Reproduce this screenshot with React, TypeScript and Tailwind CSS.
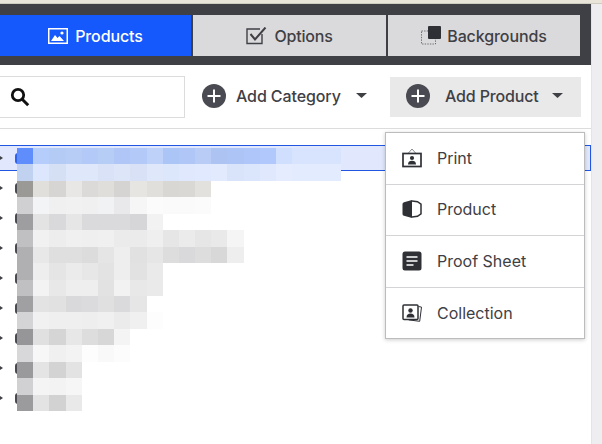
import React from 'react';

const font = "font-['Inter','Noto_Sans',sans-serif]";

// pixelated blur over the tree labels, one array per mosaic line
const mosaic: string[][] = [
  ['#5f8dfb','#b5cdfb','#b4cbf5','#b8cdf6','#b3caf8','#b6cdf6','#afc6f6','#b3c9f8','#bed1f8','#abc5f7','#b0c6f7','#b8ccf5','#adc3f2','#adc4f6','#afc6fa','#b0c8fc','#cfdffd','#d8e4fd','#d8e4fd','#d8e4fd'],
  ['#c1d1f0','#dce6fd','#d6e0f5','#dfe7fa','#dfe7fa','#d9e2f7','#dde6f9','#d8e1f5','#dfe7fa','#dde7fc','#dfe8fd','#e0e9fd','#e2ebfd','#d9e4fb','#dbe5fc','#dfe8fd','#e4ecfe','#e3ecfe','#e3ecfe','#e3ecfe'],
  ['#9a9996','#e0dfdc','#d6d5d3','#e8e7e5','#dbdad8','#dfdedb','#d5d4d2','#e6e5e2','#e0dfdc','#d8d7d4','#d9d8d5','#e2e1de'],
  ['#d0d0d2','#f3f4f6','#f0f0f0','#f1f1f1','#f0f0f0','#f1f2f3','#e9e9eb','#f6f6f6','#fbfbfb','#fafafa','#fafafa','#fbfbfb'],
  ['#9e9ea0','#e3e3e3','#d9d9db','#e6e6e6','#dadadc','#dadadc','#dadadc','#d6d6d8','#f2f2f2'],
  ['#c0c0c2','#f1f1f1','#ededed','#f0f0f0','#efefef','#f0f0f0','#ebebeb','#ebebeb','#efefef','#e6e6e6','#ebebeb','#e6e6e6','#e9e9e9','#f5f5f5'],
  ['#b0b0b2','#e8e8e8','#dfdfdf','#dfdfdf','#dcdcdc','#e5e5e5','#eeeeee','#e1e1e1','#e6e6e6','#dddddd','#d9d9db','#dddddd','#d8d8d8','#eeeeee'],
  ['#b0b0b2','#eeeeee','#e5e5e5','#ebebeb','#e7e7e7','#e3e3e3','#eeeeee','#e2e2e2','#eaeaea'],
  ['#c0c0c2','#f3f3f3','#e8e8e8','#eeeeee','#eeeeee','#e2e2e2','#f2f2f2','#e8e8e8','#eaeaea'],
  ['#a0a0a2','#e3e3e3','#e1e1e1','#d9d9db','#dbdbdd','#e0e0e0','#dadadc','#e6e6e6'],
  ['#d4d4d6','#f1f1f1','#efefef','#efefef','#eeeeee','#f0f0f0','#ebebeb','#f0f0f0','#fdfdfd'],
  ['#969698','#e0e0e0','#d5d5d5','#e7e7e7','#dddddd','#d7d7d7','#f4f4f4'],
  ['#d8d8da','#f7f7f7','#f0f0f0','#f3f3f3','#fdfdfd','#f9f9f9','#fcfcfc'],
  ['#9a9a9c','#e4e4e4','#d3d3d3','#e3e3e3'],
  ['#d1d1d3','#f4f4f4','#f3f3f3','#f6f6f6'],
  ['#9b9b9d','#e3e3e3','#d2d2d2','#e9e9e9'],
];

function PlusCircle() {
  return (
    <svg width="24" height="24" viewBox="0 0 24 24">
      <circle cx="12" cy="12" r="12" fill="#4a4b52" />
      <path d="M12 5.5v13M5.5 12h13" stroke="#fff" strokeWidth="2" />
    </svg>
  );
}

function Caret() {
  return (
    <svg width="11" height="5" viewBox="0 0 11 5">
      <path d="M0 0h11L5.5 5z" fill="#3f4045" />
    </svg>
  );
}

function PictureIcon() {
  return (
    <svg width="20" height="16" viewBox="0 0 20 16">
      <rect x="0.75" y="0.75" width="18.5" height="14.5" fill="none" stroke="#fff" strokeWidth="1.5" />
      <path d="M3 13l4-6 2.5 3 2-2 4.5 5z" fill="#fff" />
      <circle cx="14" cy="5" r="1.6" fill="#fff" />
    </svg>
  );
}

function CheckIcon() {
  return (
    <svg width="21" height="18" viewBox="0 0 21 18">
      <path d="M16 7v9.5H1V2h13" fill="none" stroke="#3f4045" strokeWidth="1.4" />
      <path d="M4.5 7l4.5 5.5L19.5 0.5" fill="none" stroke="#3f4045" strokeWidth="2" />
    </svg>
  );
}

function BackgroundIcon() {
  return (
    <svg width="21" height="19" viewBox="0 0 21 19">
      <rect x="0.5" y="5" width="14" height="13" fill="none" stroke="#55565b" strokeWidth="0.8" strokeDasharray="1.4 1.2" />
      <rect x="7" y="0" width="13" height="13" rx="1" fill="#2f3035" />
    </svg>
  );
}

function PrintIcon() {
  return (
    <svg width="20" height="20" viewBox="0 0 20 20">
      <path d="M6 5.5L10 1l4 4.5" fill="none" stroke="#8a8b90" strokeWidth="1" />
      <rect x="1" y="5.5" width="18" height="13" fill="none" stroke="#2f3035" strokeWidth="1.7" />
      <circle cx="10" cy="10" r="2.1" fill="#2f3035" />
      <path d="M6 16.5c0-3 1.6-3.8 4-3.8s4 .8 4 3.8z" fill="#2f3035" />
    </svg>
  );
}

function BookIcon() {
  return (
    <svg width="20" height="18" viewBox="0 0 20 18">
      <path d="M0.5 4Q0.5 2.6 2 2.2L10 0v18L2 15.8Q0.5 15.4 0.5 14z" fill="#2f3035" />
      <path d="M10 1l5.5 0.7 3.5 2.5v9.6l-3.5 2.5L10 17" fill="none" stroke="#2f3035" strokeWidth="1.5" />
    </svg>
  );
}

function SheetIcon() {
  return (
    <svg width="20" height="20" viewBox="0 0 20 20">
      <rect x="0.5" y="0.5" width="19" height="19" rx="2.5" fill="#2f3035" />
      <path d="M4.5 6h11M4.5 10h11M4.5 14h7" stroke="#fff" strokeWidth="1.7" />
    </svg>
  );
}

function CollectionIcon() {
  return (
    <svg width="20" height="18" viewBox="0 0 20 18">
      <path d="M16.5 2.5l3 .6-1.8 14.2-11-1.4" fill="none" stroke="#2f3035" strokeWidth="1" />
      <rect x="1" y="1" width="15" height="14.5" rx="1" fill="#fff" stroke="#2f3035" strokeWidth="1.5" />
      <circle cx="8.5" cy="6.5" r="2.2" fill="#2f3035" />
      <path d="M4.5 13.5c0-3 1.7-4 4-4s4 1 4 4z" fill="#2f3035" />
    </svg>
  );
}

const menuItems = [
  { label: 'Print', icon: <PrintIcon />, height: 'h-[52px] pb-[1px]' },
  { label: 'Product', icon: <BookIcon />, height: 'h-[51px] pb-[2px]' },
  { label: 'Proof Sheet', icon: <SheetIcon />, height: 'h-[52px] pb-[2px]' },
  { label: 'Collection', icon: <CollectionIcon />, height: 'h-[50px] pb-[1px]' },
];

function TreeRow({ selected }: { selected?: boolean }) {
  return (
    <div className={`flex items-center h-[26px] ${selected ? 'bg-[#e1e8fd] border-y border-r border-[#2356e0]' : ''}`}>
      <span className="w-0 h-0 border-y-[2.5px] border-y-transparent border-l-[3px] border-l-[#3f4045]" />
      <span className={`ml-[12px] w-[3px] h-[11px] rounded-l-sm ${selected ? 'bg-[#2f62f0]' : 'bg-[#4a4b50]'}`} />
    </div>
  );
}

export default function App() {
  return (
    <div className={`relative w-[602px] h-[444px] overflow-hidden bg-white flex flex-col ${font}`}>
      <div className="h-[4px] bg-[#e9e6d9] border-b border-[#cfcdc2]" />
      <div className="flex flex-1">
        <div className="w-[592px] flex flex-col bg-white border-r border-[#e4e4e6]">
          {/* tabs */}
          <div className="h-[61px] bg-[#3f4045] pt-[11px] flex gap-[2px]">
            <div className="w-[191px] h-[41px] bg-[#1558fb] flex items-center justify-center gap-[7px] text-white text-[16px] font-medium tracking-[-0.1px]">
              <PictureIcon />
              <span>Products</span>
            </div>
            <div className="w-[193px] h-[41px] bg-[#dadadc] flex items-center justify-center gap-[7px] text-[#3f4045] text-[16px] font-medium tracking-[-0.2px]">
              <CheckIcon />
              <span>Options</span>
            </div>
            <div className="w-[192px] h-[41px] bg-[#dadadc] flex items-center justify-center gap-[5px] text-[#3f4045] text-[16px] font-medium tracking-[-0.1px]">
              <BackgroundIcon />
              <span>Backgrounds</span>
            </div>
          </div>

          {/* toolbar */}
          <div className="h-[64px] border-b border-[#dcdcdc] flex items-center shrink-0">
            <div className="w-[185px] h-[42px] border border-l-0 border-[#dcdcdc] flex items-center pl-[10px] shrink-0">
              <svg width="20" height="20" viewBox="0 0 20 20">
                <circle cx="8" cy="8" r="5.7" fill="none" stroke="#111" strokeWidth="2.8" />
                <path d="M12.2 12.2l6 6" stroke="#111" strokeWidth="3" />
              </svg>
            </div>
            <div className="w-[205px] flex items-center pl-[17px] pb-[2px] text-[16px] font-medium text-[#3f4045] shrink-0">
              <PlusCircle />
              <span className="ml-[10px] tracking-[-0.1px]">Add Category</span>
              <span className="ml-[15px] flex"><Caret /></span>
            </div>
            <div className="w-[191px] h-[40px] bg-[#e9e9e9] flex items-center pl-[16px] pb-[2px] text-[16px] font-medium text-[#3f4045] shrink-0">
              <PlusCircle />
              <span className="ml-[15px] tracking-[-0.15px]">Add Product</span>
              <span className="ml-[13px] flex"><Caret /></span>
            </div>
          </div>

          {/* tree */}
          <div className="pt-[16px] flex flex-col gap-[4px]">
            <TreeRow selected />
            {Array.from({ length: 8 }).map((_, i) => (
              <TreeRow key={i} />
            ))}
          </div>
        </div>
        <div className="flex-1 bg-[#eeeef0]" />
      </div>

      {/* blurred labels */}
      <div className="absolute left-[17px] top-[148px] flex flex-col">
        {mosaic.map((line, i) => (
          <div key={i} className="flex h-[16.44px]">
            {line.map((c, j) => (
              <div key={j} className="w-[16.2px] h-full" style={{ backgroundColor: c }} />
            ))}
          </div>
        ))}
      </div>

      {/* add product menu */}
      <div className="absolute left-[385px] top-[132px] w-[200px] bg-white border border-[#bcbcbe] shadow-[0_1px_4px_rgba(0,0,0,0.2)] flex flex-col divide-y divide-[#d4d4d6]">
        {menuItems.map((item) => (
          <div key={item.label} className={`${item.height} flex items-center text-[16px] text-[#3f4045]`}>
            <span className="w-[51px] pl-[16px] flex items-center">{item.icon}</span>
            <span>{item.label}</span>
          </div>
        ))}
      </div>
    </div>
  );
}
